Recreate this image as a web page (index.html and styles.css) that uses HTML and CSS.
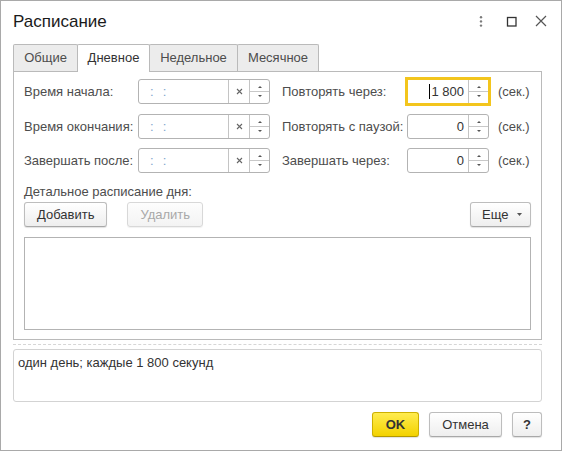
FILE: index.html
```html
<!DOCTYPE html>
<html lang="ru">
<head>
<meta charset="utf-8">
<title>Расписание</title>
<link rel="stylesheet" href="styles.css">
</head>
<body>
<div class="window">
  <div class="header">
    <div class="title">Расписание</div>
    <div class="controls">
      <span class="ctl"><svg width="20" height="20" viewBox="0 0 20 20"><circle cx="10" cy="5.2" r="1.2" fill="#7a7a7a"/><circle cx="10" cy="9.4" r="1.2" fill="#7a7a7a"/><circle cx="10" cy="13.6" r="1.2" fill="#7a7a7a"/></svg></span>
      <span class="ctl"><svg width="20" height="20" viewBox="0 0 20 20"><rect x="6.5" y="5.5" width="8.5" height="8.5" fill="none" stroke="#333" stroke-width="1.3"/></svg></span>
      <span class="ctl"><svg width="20" height="20" viewBox="0 0 20 20"><path d="M5 4 L15 14 M15 4 L5 14" stroke="#555" stroke-width="1.2" fill="none"/></svg></span>
    </div>
  </div>

  <div class="tabs">
    <div class="tab tab-general">Общие</div>
    <div class="tab tab-daily active">Дневное</div>
    <div class="tab tab-weekly">Недельное</div>
    <div class="tab tab-monthly">Месячное</div>
  </div>

  <div class="panel">
    <div class="fields">
      <span class="lbl">Время начала:</span>
      <div class="time-input">
        <div class="value"><span class="mask">:</span><span class="mask second">:</span></div>
        <div class="clear"><svg width="7" height="7" viewBox="0 0 7 7"><path d="M1 1 L6 6 M6 1 L1 6" stroke="#666" stroke-width="1.1"/></svg></div>
        <div class="spin"><span class="half up"><i class="arr-up"></i></span><span class="half down"><i class="arr-down"></i></span></div>
      </div>
      <span class="lbl lbl-right">Повторять через:</span>
      <div class="num-input focused">
        <div class="value"><i class="caret"></i>1 800</div>
        <div class="spin"><span class="half up"><i class="arr-up"></i></span><span class="half down"><i class="arr-down"></i></span></div>
      </div>
      <span class="unit">(сек.)</span>

      <span class="lbl">Время окончания:</span>
      <div class="time-input">
        <div class="value"><span class="mask">:</span><span class="mask second">:</span></div>
        <div class="clear"><svg width="7" height="7" viewBox="0 0 7 7"><path d="M1 1 L6 6 M6 1 L1 6" stroke="#666" stroke-width="1.1"/></svg></div>
        <div class="spin"><span class="half up"><i class="arr-up"></i></span><span class="half down"><i class="arr-down"></i></span></div>
      </div>
      <span class="lbl lbl-right">Повторять с паузой:</span>
      <div class="num-input">
        <div class="value">0</div>
        <div class="spin"><span class="half up"><i class="arr-up"></i></span><span class="half down"><i class="arr-down"></i></span></div>
      </div>
      <span class="unit">(сек.)</span>

      <span class="lbl">Завершать после:</span>
      <div class="time-input">
        <div class="value"><span class="mask">:</span><span class="mask second">:</span></div>
        <div class="clear"><svg width="7" height="7" viewBox="0 0 7 7"><path d="M1 1 L6 6 M6 1 L1 6" stroke="#666" stroke-width="1.1"/></svg></div>
        <div class="spin"><span class="half up"><i class="arr-up"></i></span><span class="half down"><i class="arr-down"></i></span></div>
      </div>
      <span class="lbl lbl-right">Завершать через:</span>
      <div class="num-input">
        <div class="value">0</div>
        <div class="spin"><span class="half up"><i class="arr-up"></i></span><span class="half down"><i class="arr-down"></i></span></div>
      </div>
      <span class="unit">(сек.)</span>
    </div>

    <div class="caption">Детальное расписание дня:</div>
    <div class="toolbar">
      <button class="btn">Добавить</button>
      <button class="btn disabled">Удалить</button>
      <button class="btn more">Еще<svg width="5" height="3" viewBox="0 0 5 3"><path d="M0 0 H5 L2.5 3 Z" fill="#555"/></svg></button>
    </div>
    <div class="table"></div>
  </div>

  <div class="separator"></div>
  <div class="summary">один день; каждые 1 800 секунд</div>

  <div class="footer">
    <button class="btn ok">OK</button>
    <button class="btn cancel">Отмена</button>
    <button class="btn help">?</button>
  </div>
</div>
</body>
</html>
```

FILE: styles.css
```css
* { box-sizing: border-box; }

html, body {
  margin: 0;
  padding: 0;
  background: #ffffff;
}

body {
  font-family: "Liberation Sans", Arial, sans-serif;
  font-size: 13px;
  color: #4d4d4d;
}

.window {
  width: 562px;
  height: 451px;
  border: 1px solid #a9a9a9;
  padding: 0 19px 0 12px;
  background: #fff;
  display: flex;
  flex-direction: column;
}

/* header */
.header {
  display: flex;
  align-items: center;
  justify-content: space-between;
  padding: 11px 0 12px 0;
  margin-right: -9px;
}

.title {
  font-size: 17px;
  line-height: 20px;
  color: #1a1a1a;
}

.controls {
  display: flex;
  gap: 10px;
}

.ctl {
  width: 20px;
  height: 20px;
  display: block;
}
.ctl svg { display: block; }

/* tabs */
.tabs {
  display: flex;
  align-items: flex-end;
  height: 27px;
}

.tab {
  height: 27px;
  border: 1px solid #bababa;
  border-bottom: none;
  border-radius: 2px 2px 0 0;
  background: #ececec;
  color: #4d4d4d;
  text-align: center;
  line-height: 26px;
  flex: none;
}
.tab + .tab { margin-left: -1px; }

.tab-general { width: 65px; }
.tab-daily { width: 73px; }
.tab-weekly { width: 89px; }
.tab-monthly { width: 82px; }

.tab.active {
  background: #fff;
  color: #333;
  height: 28px;
  margin-bottom: -1px;
  position: relative;
  z-index: 1;
}

/* panel */
.panel {
  border: 1px solid #bababa;
  padding: 7px 10px 9px 10px;
}

.fields {
  display: grid;
  grid-template-columns: 114px 132px 137px 82px 1fr;
  grid-auto-rows: 25px;
  row-gap: 9.5px;
  align-items: center;
}

.lbl {
  line-height: 15px;
  white-space: nowrap;
}
.lbl-right { padding-left: 12px; }

.unit {
  padding-left: 9px;
  white-space: nowrap;
}

.time-input, .num-input {
  height: 25px;
  border: 1px solid #b3b3b3;
  border-radius: 3px;
  display: flex;
  background: #fff;
}

.value {
  flex: 1;
  display: flex;
  align-items: center;
  line-height: 15px;
  color: #333;
}

.time-input .value { padding-left: 11px; }

.mask { color: #7fa3cc; }
.mask.second { margin-left: 9px; }

.num-input .value {
  justify-content: flex-end;
  padding-right: 4px;
}

.caret {
  display: inline-block;
  width: 1px;
  height: 15px;
  background: #000;
  margin-right: 1px;
}

.num-input.focused {
  border-color: #f3c51d;
  box-shadow: 0 0 0 2px #f3c51d;
  border-radius: 0;
}

.clear {
  width: 21px;
  border-left: 1px solid #c4c4c4;
  display: flex;
  align-items: center;
  justify-content: center;
}
.clear svg { display: block; }

.spin {
  width: 20px;
  border-left: 1px solid #c4c4c4;
  display: flex;
  flex-direction: column;
}

.half {
  flex: 1;
  display: flex;
  justify-content: center;
}
.half.up {
  align-items: flex-end;
  padding-bottom: 3px;
  border-bottom: 1px solid #c8c8c8;
}
.half.down {
  align-items: flex-start;
  padding-top: 3px;
}

.arr-up {
  width: 0;
  height: 0;
  border-left: 2px solid transparent;
  border-right: 2px solid transparent;
  border-bottom: 2px solid #555;
}
.arr-down {
  width: 0;
  height: 0;
  border-left: 2px solid transparent;
  border-right: 2px solid transparent;
  border-top: 2px solid #555;
}

.caption {
  margin-top: 11px;
  line-height: 15px;
}

.toolbar {
  margin-top: 3px;
  display: flex;
  gap: 20px;
}

.btn {
  height: 25px;
  padding: 0 12px;
  border: 1px solid #bdbdbd;
  border-bottom-color: #a8a8a8;
  border-radius: 3px;
  background: linear-gradient(#ffffff, #eeeeee);
  box-shadow: 0 1px 1px rgba(0, 0, 0, 0.12);
  font-family: "Liberation Sans", Arial, sans-serif;
  font-size: 13px;
  color: #333;
  display: flex;
  align-items: center;
  justify-content: center;
  flex: none;
}

.btn.disabled {
  color: #a8a8a8;
  border-color: #d8d8d8;
  background: linear-gradient(#fdfdfd, #f3f3f3);
  box-shadow: 0 1px 1px rgba(0, 0, 0, 0.06);
}

.btn.more {
  margin-left: auto;
  width: 61px;
  padding: 0 8px 0 11px;
  justify-content: space-between;
}
.btn.more svg { display: block; }

.table {
  margin-top: 10px;
  height: 93px;
  border: 1px solid #b3b3b3;
  background: #fff;
}

.separator {
  margin-top: 4px;
  border-top: 1px dashed #d6d6d6;
}

.summary {
  margin-top: 4px;
  height: 53px;
  border: 1px solid #d3d3d3;
  border-radius: 3px;
  padding: 5px 4px;
  line-height: 15px;
  color: #333;
}

.footer {
  margin-top: 10px;
  display: flex;
  justify-content: flex-end;
  gap: 10px;
}

.btn.ok {
  width: 47px;
  padding: 0;
  font-weight: bold;
  background: linear-gradient(#ffec4f, #f3d200);
  border-color: #cdb000;
  border-bottom-color: #b39800;
  color: #333;
}

.btn.cancel {
  width: 73px;
  padding: 0;
}

.btn.help {
  width: 30px;
  padding: 0;
  font-weight: bold;
}
```
